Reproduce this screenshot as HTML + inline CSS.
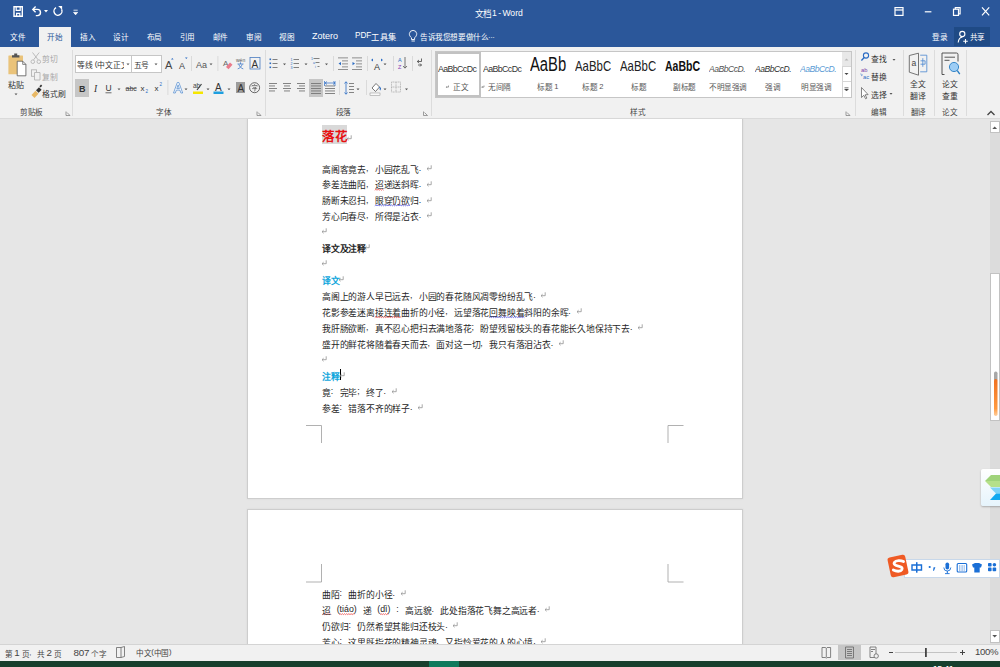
<!DOCTYPE html>
<html lang="zh-CN"><head><meta charset="utf-8">
<style>
*{margin:0;padding:0;box-sizing:border-box}
@font-face{font-family:"LSZ";src:local("Liberation Sans");size-adjust:145%;unicode-range:U+3000-303F,U+4E00-9FFF,U+FF00-FFEF}
html,body{width:1000px;height:667px;overflow:hidden;background:#e6e6e6;font-family:"LSZ","Liberation Sans",sans-serif;}
.a{position:absolute}
#title{left:0;top:0;width:1000px;height:47px;background:#2b579a}
#ribbon{left:0;top:47px;width:1000px;height:72px;background:#f1f1f1;border-bottom:1px solid #dadada}
#page1{left:247px;top:119px;width:496px;height:380px;background:#fff;border:1px solid #cdcdcd;border-top:none;box-shadow:0 0 1.5px #d4d4d4}
#page2{left:247px;top:509px;width:496px;height:140px;background:#fff;border:1px solid #cdcdcd;box-shadow:0 0 1.5px #d4d4d4}
#status{left:0;top:644px;width:1000px;height:17px;background:#f1f1f1;border-top:1px solid #d4d4d4}
#taskbar{left:0;top:661px;width:1000px;height:6px;background:#173f2d}
.tb{color:#fff;font-size:7.6px;line-height:10px;white-space:nowrap}
.t{font-size:8.8px;line-height:16px;color:#222;white-space:nowrap}
svg{position:absolute;overflow:visible}
svg.rt{position:static;display:inline-block;vertical-align:0px;margin-left:-1.5px;overflow:visible}
i{display:inline-block;font-style:normal;width:1em;text-align:left;position:relative;top:0.2em}
i.q,i.r{top:0}
i.r{text-align:right}
</style></head><body>
<!-- TITLE BAR -->
<div id="title" class="a"></div>
<svg style="left:0;top:0" width="1000" height="47">
 <g fill="none" stroke="#fff" stroke-width="1.2">
  <!-- save -->
  <path d="M14 6.7h8.3v9.6H14z" stroke-width="1.4"/>
  <path d="M16.2 6.7v3.6h4V6.7M16.6 16.3v-3h3.2v3" stroke-width="1.2"/>
  <!-- undo -->
  <path d="M33.2 9.4h4.2a3.1 3.1 0 0 1 0 6.2h-1.6" stroke-width="1.4"/>
  <path d="M35.6 6.6L32.8 9.4l2.8 2.8" stroke-width="1.4"/>
  <!-- redo circ -->
  <path d="M56 7.7a4 4 0 1 0 5.5 1.6" stroke-width="1.4"/>
  <!-- ribbon display -->
  <rect x="895" y="7.6" width="8" height="7.8"/>
  <path d="M895 10h8"/>
  <!-- minimize -->
  <path d="M924.8 11.8h6.6"/>
  <!-- restore -->
  <rect x="953.5" y="9.2" width="5" height="6.2"/>
  <path d="M955.3 9.2V7.6h4.8v6.2h-1.6"/>
  <!-- close -->
  <path d="M982 7.4l7.2 8M989.2 7.4l-7.2 8"/>
  <!-- person -->
  <circle cx="962.3" cy="34" r="2.6"/>
  <path d="M958.2 42.5c0.4-3.6 2-5.3 4.1-5.3"/>
  <path d="M965.5 39v4.5M963.2 41.2h4.6"/>
 </g>
 <path d="M44 10h4l-2 2.4z" fill="#fff"/>
 <path d="M58.2 5.9h3.9v3.9z" fill="#fff"/>
 <path d="M73.5 10.2h4.2M73.6 12.4h4l-2 2.4z" fill="#fff" stroke="#fff" stroke-width="0.8"/>
</svg>
<div class="a tb" style="left:474.8px;top:7.7px;font-size:8.6px;line-height:11px;word-spacing:-1px"><i>文</i><i>档</i>1 - Word</div>
<!-- tabs -->
<div class="a" style="left:39px;top:27px;width:32px;height:20px;background:#f1f1f1"></div>
<div class="a tb" style="left:10px;top:31px"><i>文</i><i>件</i></div>
<div class="a tb" style="left:47px;top:31px;color:#2b579a"><i>开</i><i>始</i></div>
<div class="a tb" style="left:80px;top:31px"><i>插</i><i>入</i></div>
<div class="a tb" style="left:113px;top:31px"><i>设</i><i>计</i></div>
<div class="a tb" style="left:146.5px;top:31px"><i>布</i><i>局</i></div>
<div class="a tb" style="left:179.5px;top:31px"><i>引</i><i>用</i></div>
<div class="a tb" style="left:212.5px;top:31px"><i>邮</i><i>件</i></div>
<div class="a tb" style="left:246px;top:31px"><i>审</i><i>阅</i></div>
<div class="a tb" style="left:279px;top:31px"><i>视</i><i>图</i></div>
<div class="a tb" style="left:312px;top:30.5px;font-size:9px">Zotero</div>
<div class="a tb" style="left:355px;top:31px;font-size:8.2px">PDF<i>工</i><i>具</i><i>集</i></div>
<svg style="left:408px;top:29px" width="10" height="14"><g fill="none" stroke="#fff" stroke-width="0.9"><path d="M2.5 8.3c-1.5-1.2-2.3-2.6-2.1-4.3a3.7 3.7 0 0 1 7.3 0c0.1 1.7-0.7 3.1-2.1 4.3v1.7H2.5z" transform="translate(1,0.5)"/><path d="M3.5 12h3.4"/></g></svg>
<div class="a tb" style="left:420px;top:31px"><i>告</i><i>诉</i><i>我</i><i>您</i><i>想</i><i>要</i><i>做</i><i>什</i><i>么</i>...</div>
<div class="a tb" style="left:932px;top:31px"><i>登</i><i>录</i></div>
<div class="a" style="left:954px;top:27px;width:36px;height:19px;background:#1f4a85"></div>
<svg style="left:0;top:0" width="1000" height="47"><g fill="none" stroke="#fff" stroke-width="1.1">
  <circle cx="962.3" cy="34" r="2.6"/>
  <path d="M958.2 42.5c0.4-3.6 2-5.3 4.1-5.3"/>
  <path d="M965.5 39v4.5M963.2 41.2h4.6"/></g></svg>
<div class="a tb" style="left:969.5px;top:31px"><i>共</i><i>享</i></div>

<!-- RIBBON -->
<div id="ribbon" class="a"></div>
<style>
.rl{color:#444;font-size:7.6px;line-height:10px;white-space:nowrap}
.sep{position:absolute;top:50px;width:1px;height:66px;background:#dcdcdc}
.dl{position:absolute;width:5px;height:5px}
</style>
<!-- separators -->
<div class="sep" style="left:72px"></div>
<div class="sep" style="left:265px"></div>
<div class="sep" style="left:431px"></div>
<div class="sep" style="left:855px"></div>
<div class="sep" style="left:903px"></div>
<div class="sep" style="left:934px"></div>
<div class="sep" style="left:966px"></div>
<!-- group labels -->
<div class="a rl" style="left:20px;top:106.8px"><i>剪</i><i>贴</i><i>板</i></div>
<div class="a rl" style="left:156px;top:106.8px"><i>字</i><i>体</i></div>
<div class="a rl" style="left:335.5px;top:106.8px"><i>段</i><i>落</i></div>
<div class="a rl" style="left:630px;top:106.8px"><i>样</i><i>式</i></div>
<div class="a rl" style="left:871px;top:106.8px"><i>编</i><i>辑</i></div>
<div class="a rl" style="left:910.5px;top:106.8px"><i>翻</i><i>译</i></div>
<div class="a rl" style="left:942px;top:106.8px"><i>论</i><i>文</i></div>
<svg style="left:0;top:0" width="1000" height="120">
 <g fill="none" stroke="#777" stroke-width="0.7">
  <path d="M66 111.5v4h4M67 112.5l3 3"/>
  <path d="M257 111.5v4h4M258 112.5l3 3"/>
  <path d="M423.5 111.5v4h4M424.5 112.5l3 3"/>
  <path d="M846 111.5v4h4M847 112.5l3 3"/>
 </g>
 <path d="M987.5 115l3.5-3.5 3.5 3.5" fill="none" stroke="#444" stroke-width="1.3"/>
</svg>

<!-- CLIPBOARD -->
<svg style="left:0;top:0" width="80" height="120">
 <rect x="8.4" y="55.5" width="14.6" height="18.8" fill="#eac37a" rx="0.5"/>
 <path d="M12 57.5v-2.3h2.2v-1.6h3v1.6h2.2v2.3z" fill="#555"/>
 <path d="M17.2 61.2h5.5l3.2 3.2v11.4h-8.7z" fill="#fff" stroke="#555" stroke-width="0.8"/>
 <path d="M22.7 61.2v3.2h3.2" fill="none" stroke="#555" stroke-width="0.7"/>
 <path d="M14.5 93.5h3l-1.5 1.8z" fill="#555"/>
 <!-- scissors -->
 <g fill="none" stroke="#b4b4b4" stroke-width="0.9">
  <path d="M32.5 52.5l5.6 7.3M39.2 52.5l-5.6 7.3"/>
  <circle cx="32.8" cy="61.7" r="1.8"/><circle cx="38.8" cy="61.7" r="1.8"/>
  <rect x="31.5" y="69.8" width="5" height="6.5"/>
  <path d="M34.5 72.5h5.5v7.5h-5.5z" fill="#f1f1f1"/>
 </g>
 <!-- format painter -->
 <path d="M31.5 95l4-4.2 3 3-4 4.2z" fill="#e8b865"/>
 <path d="M36 90.2l3-3 2.6 2.6-3 3z" fill="#333"/>
 <path d="M39.4 86.2l1.6-1.6 1.2 1.2-1.6 1.6z" fill="#333"/>
</svg>
<div class="a rl" style="left:8px;top:79.5px;color:#333;font-size:8px"><i>粘</i><i>贴</i></div>
<div class="a rl" style="left:42px;top:53px;color:#a8a8a8;font-size:7.8px"><i>剪</i><i>切</i></div>
<div class="a rl" style="left:42px;top:71px;color:#a8a8a8;font-size:7.8px"><i>复</i><i>制</i></div>
<div class="a rl" style="left:42px;top:88.5px;color:#333;font-size:7.8px"><i>格</i><i>式</i><i>刷</i></div>

<!-- FONT -->
<div class="a" style="left:75px;top:55px;width:57px;height:18px;background:#fff;border:1px solid #c6c6c6"></div>
<div class="a" style="left:131px;top:55px;width:31px;height:18px;background:#fff;border:1px solid #c6c6c6"></div>
<div class="a rl" style="left:77px;top:59px;color:#333;font-size:7.8px;width:47px;overflow:hidden"><i>等</i><i>线</i> (<i>中</i><i>文</i><i>正</i><i>文</i></div>
<div class="a rl" style="left:133.5px;top:59px;color:#333;font-size:7.8px"><i>五</i><i>号</i></div>
<svg style="left:0;top:0" width="270" height="120">
 <path d="M126.5 63.5h3l-1.5 1.8z M154.5 63.5h3l-1.5 1.8z" fill="#555"/>
 <text x="165" y="68.5" font-size="11" fill="#444" font-family="Liberation Sans">A</text>
 <path d="M171 59.5l1.3-1.5 1.3 1.5z" fill="#2b6cc4"/>
 <text x="179" y="68.5" font-size="9" fill="#444" font-family="Liberation Sans">A</text>
 <path d="M185 57.5l1.3 1.5 1.3-1.5z" fill="#2b6cc4"/>
 <rect x="191" y="56" width="0.8" height="15" fill="#d5d5d5"/>
 <text x="196" y="67.5" font-size="9" fill="#555" font-family="Liberation Sans">Aa</text>
 <path d="M209.5 63.5h3l-1.5 1.8z" fill="#555"/>
 <rect x="217.5" y="56" width="0.8" height="15" fill="#d5d5d5"/>
 <text x="223" y="66" font-size="8" fill="#666" font-family="Liberation Sans">A</text>
 <path d="M226 67l4-4.5 2.5 2.2-4 4.5z" fill="#ea7b8b"/>
 <text x="236" y="62" font-size="5" fill="#555" font-family="Liberation Sans">wén</text>
 <path d="M237.5 64h6M240.5 62.3v1.7M238.8 64.3c0.8 2.5 2.5 4 4.5 4.6M242.2 64.3c-0.8 2.5-2.5 4-4.5 4.6" fill="none" stroke="#2b6cc4" stroke-width="0.7"/>
 <rect x="250" y="57.5" width="10" height="11.5" fill="none" stroke="#4a7cc0" stroke-width="0.8"/>
 <text x="251.6" y="67.5" font-size="10" fill="#333" font-family="Liberation Sans">A</text>
 <!-- row 2 -->
 <rect x="75" y="79" width="14" height="18" fill="#c6c6c6"/>
 <text x="79" y="91.5" font-size="9" font-weight="bold" fill="#333" font-family="Liberation Sans">B</text>
 <text x="94" y="91.5" font-size="9.5" font-style="italic" fill="#333" font-family="Liberation Serif">I</text>
 <text x="105.5" y="91" font-size="8.5" fill="#333" font-family="Liberation Sans">U</text>
 <rect x="105.5" y="92.5" width="6" height="0.7" fill="#333"/>
 <path d="M117.5 88.5h3l-1.5 1.8z" fill="#555"/>
 <text x="125.5" y="91" font-size="7" fill="#444" font-family="Liberation Sans">abc</text>
 <rect x="125.5" y="88" width="11" height="0.6" fill="#444"/>
 <text x="140.5" y="91" font-size="8" fill="#333" font-family="Liberation Sans">x</text>
 <text x="145.5" y="93" font-size="4.5" fill="#2b6cc4" font-family="Liberation Sans">2</text>
 <text x="154.5" y="91" font-size="8" fill="#333" font-family="Liberation Sans">x</text>
 <text x="159.5" y="86" font-size="4.5" fill="#2b6cc4" font-family="Liberation Sans">2</text>
 <rect x="167.5" y="80" width="0.8" height="15" fill="#d5d5d5"/>
 <path d="M173.5 93l3.8-10.5h1.6l3.8 10.5h-1.8l-1-2.9h-3.6l-1 2.9zM176.8 88.6h2.6l-1.3-3.8z" fill="#fff" stroke="#4a86cf" stroke-width="0.7" stroke-linejoin="round"/>
 <path d="M184.5 88.5h3l-1.5 1.8z M206.5 88.5h3l-1.5 1.8z M227.5 88.5h3l-1.5 1.8z" fill="#555"/>
 <text x="193" y="88" font-size="6.5" fill="#444" font-family="Liberation Sans">ab</text>
 <path d="M197 90l4.5-6" stroke="#444" stroke-width="1.2"/>
 <rect x="193" y="91.5" width="10" height="2.5" fill="#f5e600"/>
 <text x="215" y="90.5" font-size="10" fill="#333" font-family="Liberation Sans">A</text>
 <rect x="213.5" y="91.5" width="10" height="2.5" fill="#1e9fe0"/>
 <rect x="236" y="82" width="9" height="11" fill="#9c9c9c"/>
 <text x="237.5" y="91.5" font-size="10" fill="#333" font-family="Liberation Sans">A</text>
 <circle cx="254.6" cy="87.7" r="5" fill="none" stroke="#444" stroke-width="0.8"/>
 <path d="M254.6 84v1M252 85.5h5.2v1M252 85.5v1M253 87.3h3.2l-1.2 0.9v2.6l-0.8 0.4M252 88.6h5.2" fill="none" stroke="#444" stroke-width="0.6"/>
</svg>

<!-- PARAGRAPH -->
<svg style="left:0;top:0" width="440" height="120">
 <g fill="#2b6cc4">
  <rect x="269.5" y="58.5" width="1.6" height="1.6"/><rect x="269.5" y="62.5" width="1.6" height="1.6"/><rect x="269.5" y="66.5" width="1.6" height="1.6"/>
 </g>
 <g fill="#666">
  <rect x="272.5" y="59" width="5" height="0.8"/><rect x="272.5" y="63" width="5" height="0.8"/><rect x="272.5" y="67" width="5" height="0.8"/>
  <rect x="293.5" y="59" width="5.5" height="0.8"/><rect x="293.5" y="63" width="5.5" height="0.8"/><rect x="293.5" y="67" width="5.5" height="0.8"/>
  <rect x="313.5" y="58" width="6" height="0.8"/><rect x="315.5" y="62" width="4" height="0.8"/><rect x="317.5" y="66" width="2" height="0.8"/>
 </g>
 <g font-family="Liberation Sans" font-size="3.6" fill="#2b6cc4">
  <text x="290.5" y="60.5">1</text><text x="290.5" y="64.5">2</text><text x="290.5" y="68.5">3</text>
  <text x="311" y="59.5">1</text><text x="313" y="63.5">a</text><text x="315" y="67.5">i</text>
 </g>
 <path d="M283 63.5h3l-1.5 1.8z M304.5 63.5h3l-1.5 1.8z M325 63.5h3l-1.5 1.8z M383.5 63.5h3l-1.5 1.8z" fill="#555"/>
 <rect x="333" y="56" width="0.8" height="15" fill="#d5d5d5"/>
 <g fill="#777">
  <rect x="338" y="57.5" width="10" height="0.8"/><rect x="342" y="60.5" width="6" height="0.8"/><rect x="342" y="63.5" width="6" height="0.8"/><rect x="342" y="66.5" width="6" height="0.8"/><rect x="338" y="69" width="10" height="0.8"/>
  <rect x="352" y="57.5" width="10" height="0.8"/><rect x="356" y="60.5" width="6" height="0.8"/><rect x="356" y="63.5" width="6" height="0.8"/><rect x="356" y="66.5" width="6" height="0.8"/><rect x="352" y="69" width="10" height="0.8"/>
 </g>
 <path d="M341 62l-2.5 1.6 2.5 1.6z M352.5 62l2.5 1.6-2.5 1.6z" fill="#2b6cc4"/>
 <rect x="367" y="56" width="0.8" height="15" fill="#d5d5d5"/>
 <text x="374" y="69.5" font-size="9" fill="#333" font-family="Liberation Sans">A</text>
 <path d="M371 60l2-1.5v3z M383 60l-2-1.5v3z" fill="#2b6cc4"/>
 <rect x="393" y="56" width="0.8" height="15" fill="#d5d5d5"/>
 <text x="398" y="62" font-size="5.5" fill="#2b6cc4" font-family="Liberation Sans">A</text>
 <text x="398" y="69" font-size="5.5" fill="#8a3fb5" font-family="Liberation Sans">Z</text>
 <path d="M405 57v11M403 66l2 2.2 2-2.2" fill="none" stroke="#555" stroke-width="0.8"/>
 <rect x="412" y="56" width="0.8" height="15" fill="#d5d5d5"/>
 <path d="M421.5 58.5v3h-4M419 60l-1.8 1.5 1.8 1.5 M418 65h3.5M420 63.5l1.5 1.5-1.5 1.5" fill="none" stroke="#444" stroke-width="0.8"/>
 <!-- row 2 -->
 <rect x="309" y="79" width="14" height="18" fill="#c6c6c6"/>
 <g fill="#777">
  <rect x="269" y="83" width="8" height="0.9"/><rect x="269" y="85.5" width="6" height="0.9"/><rect x="269" y="88" width="8" height="0.9"/><rect x="269" y="90.5" width="6" height="0.9"/>
  <rect x="283" y="83" width="8" height="0.9"/><rect x="284" y="85.5" width="6" height="0.9"/><rect x="283" y="88" width="8" height="0.9"/><rect x="284" y="90.5" width="6" height="0.9"/>
  <rect x="297" y="83" width="8" height="0.9"/><rect x="299" y="85.5" width="6" height="0.9"/><rect x="297" y="88" width="8" height="0.9"/><rect x="299" y="90.5" width="6" height="0.9"/>
  <rect x="311" y="83" width="10" height="0.9"/><rect x="311" y="85.5" width="10" height="0.9"/><rect x="311" y="88" width="10" height="0.9"/><rect x="311" y="90.5" width="10" height="0.9"/><rect x="311" y="93" width="10" height="0.9"/>
  <rect x="325" y="85.5" width="10" height="0.9"/><rect x="325" y="88" width="10" height="0.9"/><rect x="325" y="90.5" width="10" height="0.9"/><rect x="325" y="93" width="10" height="0.9"/>
 </g>
 <path d="M324.5 81v5M335 81v5M325 83h10M327 81.5l-2 1.5 2 1.5M333 81.5l2 1.5-2 1.5" fill="none" stroke="#2b6cc4" stroke-width="0.7"/>
 <rect x="339" y="80" width="0.8" height="15" fill="#d5d5d5"/>
 <g fill="#777"><rect x="349" y="83" width="5" height="0.9"/><rect x="349" y="86" width="5" height="0.9"/><rect x="349" y="89" width="5" height="0.9"/><rect x="349" y="92" width="5" height="0.9"/></g>
 <path d="M346 82v12M344.5 83.5l1.5-1.8 1.5 1.8M344.5 92.5l1.5 1.8 1.5-1.8" fill="none" stroke="#2b6cc4" stroke-width="0.8"/>
 <path d="M356.5 88.5h3l-1.5 1.8z M383.5 88.5h3l-1.5 1.8z M405 88.5h3l-1.5 1.8z" fill="#555"/>
 <rect x="366" y="80" width="0.8" height="15" fill="#d5d5d5"/>
 <path d="M372 88l4-4.5 3.5 3.5-4 4.5z" fill="#fff" stroke="#555" stroke-width="0.8"/>
 <path d="M379.5 87c1 1 1.2 2.2 0.5 3" fill="none" stroke="#2b6cc4" stroke-width="1.2"/>
 <rect x="370" y="93" width="10" height="2.2" fill="#fff" stroke="#888" stroke-width="0.5"/>
 <path d="M391.5 82h9v10h-9zM396 82v10M391.5 87h9" fill="none" stroke="#aaa" stroke-width="0.8" stroke-dasharray="1 0.6"/>
</svg>

<!-- STYLES GALLERY -->
<div class="a" style="left:435px;top:51px;width:417px;height:47px;background:#fff;border:1px solid #c6c6c6"></div>
<div class="a" style="left:436px;top:52px;width:45px;height:45px;border:2px solid #c2c2c2"></div>
<div class="a" style="left:841.5px;top:52px;width:10px;height:45px;border-left:1px solid #d6d6d6"></div>
<div class="a" style="left:842px;top:52px;width:9px;height:14px;background:#e8e8e8"></div>
<div class="a" style="left:842px;top:66px;width:9px;height:1px;background:#d6d6d6"></div>
<div class="a" style="left:842px;top:81px;width:9px;height:1px;background:#d6d6d6"></div>
<svg style="left:0;top:0" width="860" height="100">
 <path d="M844.5 60.5l2-2 2 2z" fill="#b8b8b8"/>
 <path d="M844.5 73l2 2 2-2z" fill="#444"/>
 <path d="M844.5 87.5h4M844.5 89l2 2 2-2z" fill="#444" stroke="#444" stroke-width="0.5"/>
</svg>
<style>.sty{position:absolute;white-space:nowrap;font-family:"Liberation Sans",sans-serif}
.sl{position:absolute;white-space:nowrap;color:#555;font-size:7.6px;line-height:10px}</style>
<div class="sty" style="left:438px;top:63.5px;font-size:8.8px;line-height:10px;color:#333;letter-spacing:-0.6px;width:41px;overflow:hidden">AaBbCcDc</div>
<div class="sty" style="left:483px;top:63.5px;font-size:8.8px;line-height:10px;color:#333;letter-spacing:-0.6px;width:41px;overflow:hidden">AaBbCcDc</div>
<div class="sty" style="left:530px;top:53px;width:37px;height:22px;overflow:hidden"><span style="display:block;font-size:20px;line-height:22px;color:#111;transform:scaleX(0.74);transform-origin:0 0;font-family:'Liberation Sans'">AaBb</span></div>
<div class="sty" style="left:575px;top:58px;width:36px;height:16px;overflow:hidden"><span style="display:block;font-size:15px;line-height:16px;color:#222;transform:scaleX(0.76);transform-origin:0 0">AaBbC</span></div>
<div class="sty" style="left:620px;top:58px;width:36px;height:16px;overflow:hidden"><span style="display:block;font-size:15px;line-height:16px;color:#222;transform:scaleX(0.76);transform-origin:0 0">AaBbC</span></div>
<div class="sty" style="left:665px;top:58px;width:36px;height:16px;overflow:hidden"><span style="display:block;font-size:15px;line-height:16px;color:#111;font-weight:bold;transform:scaleX(0.7);transform-origin:0 0">AaBbC</span></div>
<div class="sty" style="left:709px;top:63.5px;font-size:8.6px;line-height:10px;color:#555;font-style:italic;letter-spacing:-0.5px;width:40px;overflow:hidden">AaBbCcD.</div>
<div class="sty" style="left:755px;top:63.5px;font-size:8.6px;line-height:10px;color:#333;font-style:italic;letter-spacing:-0.5px;width:40px;overflow:hidden">AaBbCcD.</div>
<div class="sty" style="left:800px;top:63.5px;font-size:8.6px;line-height:10px;color:#5b9bd5;font-style:italic;letter-spacing:-0.5px;width:40px;overflow:hidden">AaBbCcD.</div>
<div class="sl" style="left:453px;top:81.5px"><i>正</i><i>文</i></div>
<div class="sl" style="left:488px;top:81.5px"><i>无</i><i>间</i><i>隔</i></div>
<div class="sl" style="left:537px;top:81.5px"><i>标</i><i>题</i> 1</div>
<div class="sl" style="left:582px;top:81.5px"><i>标</i><i>题</i> 2</div>
<div class="sl" style="left:631px;top:81.5px"><i>标</i><i>题</i></div>
<div class="sl" style="left:673px;top:81.5px"><i>副</i><i>标</i><i>题</i></div>
<div class="sl" style="left:709px;top:81.5px"><i>不</i><i>明</i><i>显</i><i>强</i><i>调</i></div>
<div class="sl" style="left:765px;top:81.5px"><i>强</i><i>调</i></div>
<div class="sl" style="left:801px;top:81.5px"><i>明</i><i>显</i><i>强</i><i>调</i></div>
<svg style="left:0;top:0" width="500" height="100"><path d="M448.5 85.5v1.6h-2M447 86.2l-0.8 0.9 0.8 0.9M484 85.5v1.6h-2M482.5 86.2l-0.8 0.9 0.8 0.9" fill="none" stroke="#666" stroke-width="0.6"/></svg>

<!-- EDITING / TRANSLATE / THESIS -->
<svg style="left:0;top:0" width="1000" height="100">
 <circle cx="866" cy="55.5" r="2.6" fill="none" stroke="#2b6cc4" stroke-width="1.1"/>
 <path d="M864.2 57.5l-2.8 3" stroke="#2b6cc4" stroke-width="1.3"/>
 <path d="M892.5 59h3l-1.5 1.8z M889.5 93h3l-1.5 1.8z" fill="#555"/>
 <text x="861" y="72" font-size="5.8" fill="#7a3ea8" font-family="Liberation Sans">ab</text>
 <text x="863" y="78.5" font-size="5.8" fill="#2b6cc4" font-family="Liberation Sans">ac</text>
 <path d="M860.8 73.5l0.8 2.2 1.2-1" fill="none" stroke="#2b6cc4" stroke-width="0.6"/>
 <path d="M861.5 87.5v10l2.3-2.2 1.8 3.5 1.3-0.7-1.8-3.3 3 -0.2z" fill="#fff" stroke="#555" stroke-width="0.7"/>
 <!-- translate icon -->
 <path d="M909.3 55.5l9.2-2.3v22l-9.2-3z" fill="none" stroke="#555" stroke-width="0.8"/>
 <text x="911.5" y="66.2" font-size="8.5" fill="#444" font-family="Liberation Sans">a</text>
 <path d="M920.2 55.2h6.6v16.6h-6.6" fill="none" stroke="#4a86cf" stroke-width="0.8"/>
 <path d="M920.5 60.8h4.6v3.4h-4.6M922.8 58.2v8.6" fill="none" stroke="#4a86cf" stroke-width="0.8"/>
 <!-- thesis icon -->
 <path d="M944.5 74.5h-2.5v-21.5h14.5a1.5 1.5 0 0 1 1.5 1.5v7" fill="none" stroke="#444" stroke-width="0.9"/>
 <path d="M944.5 57.2h10.5M944.5 60.3h5" stroke="#444" stroke-width="0.9"/>
 <circle cx="954" cy="67" r="4.6" fill="#9dcdf5" stroke="#2a7fc4" stroke-width="0.9"/>
 <path d="M957.2 70.5l2.6 3.6" stroke="#2a7fc4" stroke-width="1.3"/>
</svg>
<div class="a rl" style="left:871px;top:53.5px;color:#333;font-size:7.8px"><i>查</i><i>找</i></div>
<div class="a rl" style="left:871px;top:71.5px;color:#333;font-size:7.8px"><i>替</i><i>换</i></div>
<div class="a rl" style="left:871px;top:89.5px;color:#333;font-size:7.8px"><i>选</i><i>择</i></div>
<div class="a rl" style="left:910px;top:78.5px;color:#333;font-size:7.8px"><i>全</i><i>文</i></div>
<div class="a rl" style="left:910px;top:90.5px;color:#333;font-size:7.8px"><i>翻</i><i>译</i></div>
<div class="a rl" style="left:942px;top:78.5px;color:#333;font-size:7.8px"><i>论</i><i>文</i></div>
<div class="a rl" style="left:942px;top:90.5px;color:#333;font-size:7.8px"><i>查</i><i>重</i></div>

<div id="page1" class="a"></div>
<div id="page2" class="a"></div>
<style>
.p{position:absolute;left:322px;font-size:8.8px;line-height:16px;height:16px;color:#262626;white-space:nowrap}
.pm{color:#8a8a8a;font-size:7px;margin-left:-1px;letter-spacing:0}
.b{font-weight:bold}
.cy{color:#10a6dc;font-weight:bold}
.wr{text-decoration:underline wavy #e02020;text-decoration-thickness:0.8px;text-underline-offset:-0.5px}
.wb{text-decoration:underline wavy #3030e0;text-decoration-thickness:0.8px;text-underline-offset:-0.5px}
</style>
<div class="a" style="left:322px;top:125px;width:25px;height:19px;background:#d9d9d9"></div>
<div class="p" style="top:126px;font-size:12.5px;line-height:17px;height:17px;color:#e81010;font-weight:bold"><i>落</i><i>花</i><svg class="rt" style="vertical-align:-2.5px" width="6" height="6" viewBox="0 0 6 6"><path d="M5.2 0.3v3.4H1.2M2.6 2.2L1 3.7l1.6 1.5" fill="none" stroke="#8c8c8c" stroke-width="0.75"/></svg></div>
<div class="p" style="top:160px"><i>高</i><i>阁</i><i>客</i><i>竟</i><i>去</i><i class="q">,</i><i>小</i><i>园</i><i>花</i><i>乱</i><i>飞</i><i class="q">.</i><svg class="rt" width="6" height="6" viewBox="0 0 6 6"><path d="M5.2 0.3v3.4H1.2M2.6 2.2L1 3.7l1.6 1.5" fill="none" stroke="#8c8c8c" stroke-width="0.75"/></svg></div>
<div class="p" style="top:175.5px"><i>参</i><i>差</i><i>连</i><i>曲</i><i>陌</i><i class="q">,</i><span><i>迢</i></span><i>递</i><i>送</i><i>斜</i><i>晖</i><i class="q">.</i><svg class="rt" width="6" height="6" viewBox="0 0 6 6"><path d="M5.2 0.3v3.4H1.2M2.6 2.2L1 3.7l1.6 1.5" fill="none" stroke="#8c8c8c" stroke-width="0.75"/></svg></div>
<div class="p" style="top:191.5px"><i>肠</i><i>断</i><i>未</i><i>忍</i><i>扫</i><i class="q">,</i><span><i>眼</i><i>穿</i><i>仍</i><i>欲</i></span><i>归</i><i class="q">.</i><svg class="rt" width="6" height="6" viewBox="0 0 6 6"><path d="M5.2 0.3v3.4H1.2M2.6 2.2L1 3.7l1.6 1.5" fill="none" stroke="#8c8c8c" stroke-width="0.75"/></svg></div>
<div class="p" style="top:207px"><i>芳</i><i>心</i><i>向</i><i>春</i><i>尽</i><i class="q">,</i><i>所</i><i>得</i><i>是</i><i>沾</i><i>衣</i><i class="q">.</i><svg class="rt" width="6" height="6" viewBox="0 0 6 6"><path d="M5.2 0.3v3.4H1.2M2.6 2.2L1 3.7l1.6 1.5" fill="none" stroke="#8c8c8c" stroke-width="0.75"/></svg></div>
<div class="p" style="top:223px"><svg class="rt" width="6" height="6" viewBox="0 0 6 6"><path d="M5.2 0.3v3.4H1.2M2.6 2.2L1 3.7l1.6 1.5" fill="none" stroke="#8c8c8c" stroke-width="0.75"/></svg></div>
<div class="p b" style="top:239px"><i>译</i><i>文</i><i>及</i><i>注</i><i>释</i><svg class="rt" width="6" height="6" viewBox="0 0 6 6"><path d="M5.2 0.3v3.4H1.2M2.6 2.2L1 3.7l1.6 1.5" fill="none" stroke="#8c8c8c" stroke-width="0.75"/></svg></div>
<div class="p" style="top:255px"><svg class="rt" width="6" height="6" viewBox="0 0 6 6"><path d="M5.2 0.3v3.4H1.2M2.6 2.2L1 3.7l1.6 1.5" fill="none" stroke="#8c8c8c" stroke-width="0.75"/></svg></div>
<div class="p cy" style="top:271px"><i>译</i><i>文</i><svg class="rt" width="6" height="6" viewBox="0 0 6 6"><path d="M5.2 0.3v3.4H1.2M2.6 2.2L1 3.7l1.6 1.5" fill="none" stroke="#8c8c8c" stroke-width="0.75"/></svg></div>
<div class="p" style="top:287px"><i>高</i><i>阁</i><i>上</i><i>的</i><i>游</i><i>人</i><i>早</i><i>已</i><i>远</i><i>去</i><i class="q">,</i><i>小</i><i>园</i><i>的</i><i>春</i><i>花</i><i>随</i><i>风</i><i>凋</i><i>零</i><i>纷</i><i>纷</i><i>乱</i><i>飞</i><i class="q">.</i><svg class="rt" width="6" height="6" viewBox="0 0 6 6"><path d="M5.2 0.3v3.4H1.2M2.6 2.2L1 3.7l1.6 1.5" fill="none" stroke="#8c8c8c" stroke-width="0.75"/></svg></div>
<div class="p" style="top:303px"><i>花</i><i>影</i><i>参</i><i>差</i><i>迷</i><i>离</i><span><i>接</i><i>连</i></span><i>着</i><i>曲</i><i>折</i><i>的</i><i>小</i><i>径</i><i class="q">,</i><i>远</i><i>望</i><i>落</i><i>花</i><span><i>回</i><i>舞</i><i>映</i><i>着</i></span><i>斜</i><i>阳</i><i>的</i><i>余</i><i>晖</i><i class="q">.</i><svg class="rt" width="6" height="6" viewBox="0 0 6 6"><path d="M5.2 0.3v3.4H1.2M2.6 2.2L1 3.7l1.6 1.5" fill="none" stroke="#8c8c8c" stroke-width="0.75"/></svg></div>
<div class="p" style="top:319px"><i>我</i><i>肝</i><i>肠</i><i>欲</i><i>断</i><i class="q">,</i><i>真</i><i>不</i><i>忍</i><i>心</i><i>把</i><i>扫</i><i>去</i><i>满</i><i>地</i><i>落</i><i>花</i><i class="q">;</i><i>盼</i><i>望</i><i>残</i><i>留</i><i>枝</i><i>头</i><i>的</i><i>春</i><i>花</i><i>能</i><i>长</i><i>久</i><i>地</i><i>保</i><i>持</i><i>下</i><i>去</i><i class="q">.</i><svg class="rt" width="6" height="6" viewBox="0 0 6 6"><path d="M5.2 0.3v3.4H1.2M2.6 2.2L1 3.7l1.6 1.5" fill="none" stroke="#8c8c8c" stroke-width="0.75"/></svg></div>
<div class="p" style="top:335px"><i>盛</i><i>开</i><i>的</i><i>鲜</i><i>花</i><i>将</i><i>随</i><i>着</i><i>春</i><i>天</i><i>而</i><i>去</i><i class="q">,</i><i>面</i><i>对</i><i>这</i><i>一</i><i>切</i><i class="q">,</i><i>我</i><i>只</i><i>有</i><i>落</i><i>泪</i><i>沾</i><i>衣</i><i class="q">.</i><svg class="rt" width="6" height="6" viewBox="0 0 6 6"><path d="M5.2 0.3v3.4H1.2M2.6 2.2L1 3.7l1.6 1.5" fill="none" stroke="#8c8c8c" stroke-width="0.75"/></svg></div>
<div class="p" style="top:351px"><svg class="rt" width="6" height="6" viewBox="0 0 6 6"><path d="M5.2 0.3v3.4H1.2M2.6 2.2L1 3.7l1.6 1.5" fill="none" stroke="#8c8c8c" stroke-width="0.75"/></svg></div>
<div class="p cy" style="top:367px"><i>注</i><i>释</i><span style="display:inline-block;width:0.8px;height:11px;background:#000;vertical-align:-2px"></span><svg class="rt" width="6" height="6" viewBox="0 0 6 6"><path d="M5.2 0.3v3.4H1.2M2.6 2.2L1 3.7l1.6 1.5" fill="none" stroke="#8c8c8c" stroke-width="0.75"/></svg></div>
<div class="p" style="top:383px"><i>竟</i><i class="q">:</i><i>完</i><i>毕</i><i class="q">;</i><i>终</i><i>了</i><i class="q">.</i><svg class="rt" width="6" height="6" viewBox="0 0 6 6"><path d="M5.2 0.3v3.4H1.2M2.6 2.2L1 3.7l1.6 1.5" fill="none" stroke="#8c8c8c" stroke-width="0.75"/></svg></div>
<div class="p" style="top:399px"><i>参</i><i>差</i><i class="q">:</i><i>错</i><i>落</i><i>不</i><i>齐</i><i>的</i><i>样</i><i>子</i><i class="q">.</i><svg class="rt" width="6" height="6" viewBox="0 0 6 6"><path d="M5.2 0.3v3.4H1.2M2.6 2.2L1 3.7l1.6 1.5" fill="none" stroke="#8c8c8c" stroke-width="0.75"/></svg></div>
<svg style="left:0;top:0" width="1000" height="667">
 <path d="M306 425.5h15.5v17.5M683.5 425.5h-15.5v17.5" fill="none" stroke="#a8a8a8" stroke-width="0.9"/>
 <path d="M321.5 564v18h-15.5M668 564v18h15.5" fill="none" stroke="#a8a8a8" stroke-width="0.9"/>
</svg>
<svg style="left:0;top:0" width="1000" height="667"><path d="M374.8 190.2L375.9 189.3L377.0 190.2L378.1 189.3L379.2 190.2L380.3 189.3L381.4 190.2L382.5 189.3L383.6 190.2" fill="none" stroke="#e83030" stroke-width="0.7"/><path d="M374.8 205.8L375.9 204.9L377.0 205.8L378.1 204.9L379.2 205.8L380.3 204.9L381.4 205.8L382.5 204.9L383.6 205.8L384.7 204.9L385.8 205.8L386.9 204.9L388.0 205.8L389.1 204.9L390.2 205.8L391.3 204.9L392.4 205.8L393.5 204.9L394.6 205.8L395.7 204.9L396.8 205.8L397.9 204.9L399.0 205.8L400.1 204.9L401.2 205.8L402.3 204.9L403.4 205.8L404.5 204.9L405.6 205.8L406.7 204.9L407.8 205.8L408.9 204.9L410.0 205.8" fill="none" stroke="#3b3bd8" stroke-width="0.7"/><path d="M374.8 317.6L375.9 316.7L377.0 317.6L378.1 316.7L379.2 317.6L380.3 316.7L381.4 317.6L382.5 316.7L383.6 317.6L384.7 316.7L385.8 317.6L386.9 316.7L388.0 317.6L389.1 316.7L390.2 317.6L391.3 316.7L392.4 317.6L393.5 316.7L394.6 317.6L395.7 316.7L396.8 317.6L397.9 316.7L399.0 317.6L400.1 316.7L401.2 317.6" fill="none" stroke="#e83030" stroke-width="0.7"/><path d="M489.2 317.6L490.3 316.7L491.4 317.6L492.5 316.7L493.6 317.6L494.7 316.7L495.8 317.6L496.9 316.7L498.0 317.6L499.1 316.7L500.2 317.6L501.3 316.7L502.4 317.6L503.5 316.7L504.6 317.6L505.7 316.7L506.8 317.6L507.9 316.7L509.0 317.6L510.1 316.7L511.2 317.6L512.3 316.7L513.4 317.6L514.5 316.7L515.6 317.6L516.7 316.7L517.8 317.6L518.9 316.7L520.0 317.6L521.1 316.7L522.2 317.6L523.3 316.7L524.4 317.6" fill="none" stroke="#3b3bd8" stroke-width="0.7"/><path d="M322.5 614.6L323.6 613.7L324.7 614.6L325.8 613.7L326.9 614.6L328.0 613.7L329.1 614.6L330.2 613.7L331.0 614.6" fill="none" stroke="#e83030" stroke-width="0.7"/><path d="M339.0 614.6L340.1 613.7L341.2 614.6L342.3 613.7L343.4 614.6L344.5 613.7L345.6 614.6L346.7 613.7L347.8 614.6L348.9 613.7L350.0 614.6L351.1 613.7L352.2 614.6L353.3 613.7L354.0 614.6" fill="none" stroke="#e83030" stroke-width="0.7"/><path d="M380.0 614.6L381.1 613.7L382.2 614.6L383.3 613.7L384.4 614.6L385.5 613.7L386.6 614.6L387.7 613.7L388.0 614.6" fill="none" stroke="#e83030" stroke-width="0.7"/></svg>
<div class="p" style="top:585px"><i>曲</i><i>陌</i><i class="q">:</i><i>曲</i><i>折</i><i>的</i><i>小</i><i>径</i><i class="q">.</i><svg class="rt" width="6" height="6" viewBox="0 0 6 6"><path d="M5.2 0.3v3.4H1.2M2.6 2.2L1 3.7l1.6 1.5" fill="none" stroke="#8c8c8c" stroke-width="0.75"/></svg></div>
<div class="p" style="top:601px"><span><i>迢</i></span><i class="r">(</i><span>tiáo</span><i class="q">)</i><i>递</i><i class="r">(</i><span>dì</span><i class="q">)</i><i class="q">:</i><i>高</i><i>远</i><i>貌</i><i class="q">.</i><i>此</i><i>处</i><i>指</i><i>落</i><i>花</i><i>飞</i><i>舞</i><i>之</i><i>高</i><i>远</i><i>者</i><i class="q">.</i><svg class="rt" width="6" height="6" viewBox="0 0 6 6"><path d="M5.2 0.3v3.4H1.2M2.6 2.2L1 3.7l1.6 1.5" fill="none" stroke="#8c8c8c" stroke-width="0.75"/></svg></div>
<div class="p" style="top:617px"><i>仍</i><i>欲</i><i>归</i><i class="q">:</i><i>仍</i><i>然</i><i>希</i><i>望</i><i>其</i><i>能</i><i>归</i><i>还</i><i>枝</i><i>头</i><i class="q">.</i><svg class="rt" width="6" height="6" viewBox="0 0 6 6"><path d="M5.2 0.3v3.4H1.2M2.6 2.2L1 3.7l1.6 1.5" fill="none" stroke="#8c8c8c" stroke-width="0.75"/></svg></div>
<div class="p" style="top:633px"><i>芳</i><i>心</i><i class="q">:</i><i>这</i><i>里</i><i>既</i><i>指</i><i>花</i><i>的</i><i>精</i><i>神</i><i>灵</i><i>魂</i><i class="q">,</i><i>又</i><i>指</i><i>怜</i><i>爱</i><i>花</i><i>的</i><i>人</i><i>的</i><i>心</i><i>境</i><i class="q">.</i><svg class="rt" width="6" height="6" viewBox="0 0 6 6"><path d="M5.2 0.3v3.4H1.2M2.6 2.2L1 3.7l1.6 1.5" fill="none" stroke="#8c8c8c" stroke-width="0.75"/></svg></div>

<!-- SCROLLBAR -->
<div class="a" style="left:990px;top:121px;width:10px;height:523px;background:#dcdcdc"></div>
<div class="a" style="left:990px;top:121px;width:9.5px;height:12px;background:#fff;border:1px solid #c2c2c2"></div>
<div class="a" style="left:990px;top:273px;width:9.5px;height:148px;background:#fff;border:1px solid #c2c2c2"></div>
<div class="a" style="left:990px;top:630px;width:9.5px;height:13px;background:#fff;border:1px solid #c2c2c2"></div>
<svg style="left:0;top:0" width="1000" height="667">
 <path d="M992.3 129l2.4-2.6 2.4 2.6z" fill="#555"/>
 <path d="M992.3 635l2.4 2.6 2.4-2.6z" fill="#555"/>
 <defs><linearGradient id="og" x1="0" y1="0" x2="0" y2="1"><stop offset="0" stop-color="#f07020"/><stop offset="0.8" stop-color="#ff9a40"/><stop offset="1" stop-color="#ffd0a0"/></linearGradient></defs>
 <rect x="994" y="371.5" width="3.5" height="10" rx="1.7" fill="#a8a8a8"/>
 <rect x="994" y="379" width="3.5" height="37" rx="1.7" fill="url(#og)"/>
</svg>

<div id="status" class="a"></div>
<div id="taskbar" class="a"></div>
<style>.sb{position:absolute;top:647px;font-size:7.6px;line-height:10px;color:#444;white-space:nowrap}
.sn{font-size:9.8px;letter-spacing:-0.2px;position:relative;top:0.5px}</style>
<div class="sb" style="left:4.5px"><i>第</i> <span class="sn">1</span> <i>页</i><i class="q">,</i><i>共</i> <span class="sn">2</span> <i>页</i></div>
<div class="sb" style="left:73.5px"><span class="sn">807</span> <i>个</i><i>字</i></div>
<div class="sb" style="left:136px"><i>中</i><i>文</i>(<i>中</i><i>国</i>)</div>
<div class="a" style="z-index:0;left:838px;top:645px;width:23px;height:15px;background:#c6c6c6"></div>
<svg style="left:0;top:0" width="1000" height="667">
 <g fill="none" stroke="#666" stroke-width="0.8">
  <path d="M116.5 647.5h4.5v10h-4.5zM121 647.5l3.5-1v10l-3.5 1"/>
  <path d="M822 647.5h3.5l0.8 1 0.8-1h3.5v10h-3.5l-0.8 0.8-0.8-0.8h-3.5z M826.3 648.5v9"/>
  <path d="M845.5 647h8v11h-8z M847 649.5h5M847 651.5h5M847 653.5h5M847 655.5h5"/>
  <path d="M870 647h6v10.5h-6z M871 649.5h4M871 651.5h2"/>
  <circle cx="876.2" cy="656" r="2.2" fill="#f1f1f1"/>
 </g>
 <path d="M889 652.5h4" stroke="#444" stroke-width="1"/>
 <path d="M895 652.5h62" stroke="#b8b8b8" stroke-width="0.8"/>
 <rect x="925" y="648" width="1.8" height="9" fill="#444"/>
 <path d="M960 652.5h5M962.5 650v5" stroke="#444" stroke-width="1"/>
</svg>
<div class="sb" style="left:975px;font-size:9.6px;letter-spacing:-0.3px">100%</div>


<!-- green widget -->
<div class="a" style="left:981px;top:469px;width:22px;height:37px;background:linear-gradient(#ffffff,#e6f4fc);border-radius:2px;box-shadow:0 1px 2px rgba(0,0,0,0.25)"></div>
<svg style="left:0;top:0" width="1000" height="667">
 <path d="M985 481l6-6h9v6z" fill="#9fd37a"/><path d="M985 481h15v6h-9z" fill="#b5e08a"/>
 <path d="M990 487.5h10v6h-4z" fill="#7fd3f8"/><path d="M996 493.5h4v6.5h-10z" fill="#12a9f0"/>
</svg>
<!-- sogou bar -->
<div class="a" style="left:904px;top:558.5px;width:96px;height:19px;background:#fff;border:1px solid #c8d8ea"></div>
<div class="a" style="left:889px;top:556px;width:18px;height:20px;background:#ef5a24;border-radius:2.5px;transform:rotate(-12deg)"></div>
<svg style="left:0;top:0" width="1000" height="667">
 <path d="M903.5 561.5c-2.5-1.3-7.5-1.5-9 0.8-1.3 2 1 3.2 3.8 3.8 3 0.6 4.6 1.6 3.6 3.6-1.2 2.2-5.8 1.8-8.6 0.3" fill="none" stroke="#fff" stroke-width="2.8" stroke-linecap="round"/>
 <g fill="#1a6fd6">
  <path d="M912 565h9.5v5h-9.5z" fill="none" stroke="#1a6fd6" stroke-width="1.4"/>
  <rect x="916" y="562.2" width="1.5" height="10.5"/>
  <circle cx="929.7" cy="567" r="1.1"/>
  <path d="M933.6 567.2h1.8l-1.4 3.6h-1z"/>
  <rect x="945.5" y="562.5" width="3.6" height="7" rx="1.8"/>
  <path d="M943.8 567.5a3.5 3.5 0 0 0 7 0" fill="none" stroke="#1a6fd6" stroke-width="0.9"/>
  <rect x="946.8" y="571" width="1" height="2.5"/><rect x="945" y="573.2" width="4.6" height="0.9"/>
  <rect x="957.2" y="563.5" width="9.5" height="8.5" rx="1" fill="none" stroke="#1a6fd6" stroke-width="1.1"/>
  <path d="M959 566h6M959 568h6M959 570h6" stroke="#1a6fd6" stroke-width="0.8" stroke-dasharray="1 0.6"/>
  <path d="M972 564.5l3-1.5h4l3 1.5-1 3h-1.3v5h-5.4v-5h-1.3z"/>
  <rect x="988" y="563" width="3.6" height="3.6" rx="0.8"/><rect x="992.6" y="563" width="3.6" height="3.6" rx="1.8"/>
  <rect x="988" y="567.6" width="3.6" height="3.6" rx="0.8"/><rect x="992.6" y="567.6" width="3.6" height="3.6" rx="0.8"/>
 </g>
</svg>
<div class="a" style="left:429px;top:661px;width:30px;height:6px;background:#0e7a5c"></div>
<div class="a" style="left:933px;top:663.5px;font-size:8px;line-height:9px;color:#fff;font-weight:bold">15:41</div>
</body></html>
